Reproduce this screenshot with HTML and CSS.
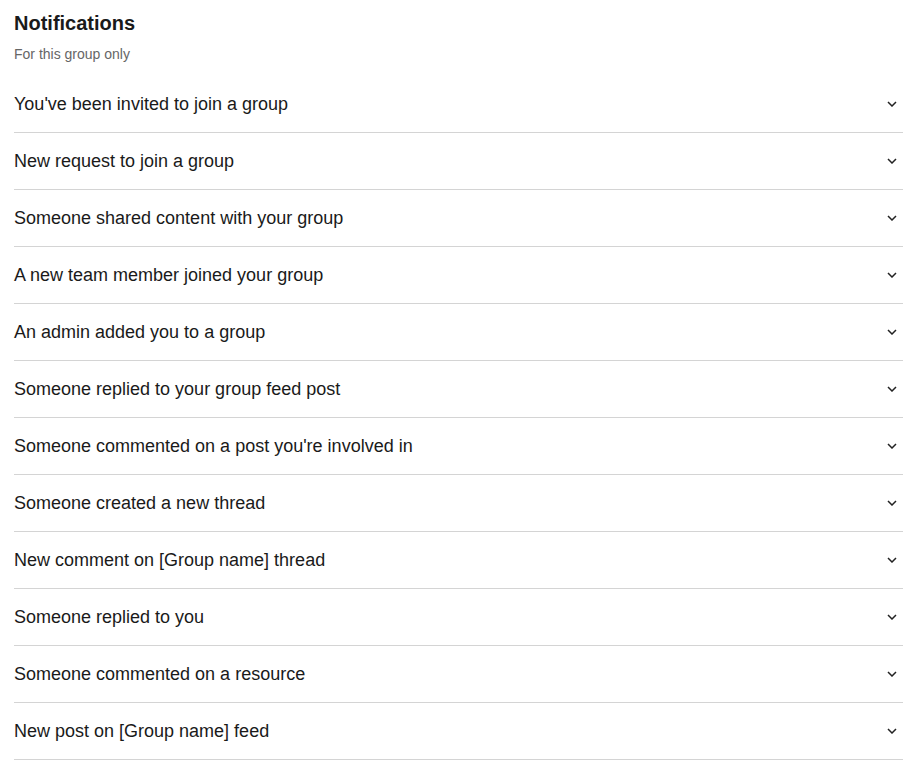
FILE: index.html
```html
<!DOCTYPE html>
<html lang="en">
<head>
  <meta charset="UTF-8">
  <meta name="viewport" content="width=device-width, initial-scale=1.0">
  <title>Notifications</title>
  <link rel="stylesheet" href="styles.css">
</head>
<body>
  <div class="settings">
    <h2 class="title">Notifications</h2>
    <p class="subtitle">For this group only</p>

    <ul class="notify-list">
      <li class="notify-row"><span>You've been invited to join a group</span><svg class="chevron" width="10" height="6" viewBox="0 0 10 6"><path d="M1 1l4 4 4-4" fill="none" stroke="#222" stroke-width="1.5"/></svg></li>
      <li class="notify-row"><span>New request to join a group</span><svg class="chevron" width="10" height="6" viewBox="0 0 10 6"><path d="M1 1l4 4 4-4" fill="none" stroke="#222" stroke-width="1.5"/></svg></li>
      <li class="notify-row"><span>Someone shared content with your group</span><svg class="chevron" width="10" height="6" viewBox="0 0 10 6"><path d="M1 1l4 4 4-4" fill="none" stroke="#222" stroke-width="1.5"/></svg></li>
      <li class="notify-row"><span>A new team member joined your group</span><svg class="chevron" width="10" height="6" viewBox="0 0 10 6"><path d="M1 1l4 4 4-4" fill="none" stroke="#222" stroke-width="1.5"/></svg></li>
      <li class="notify-row"><span>An admin added you to a group</span><svg class="chevron" width="10" height="6" viewBox="0 0 10 6"><path d="M1 1l4 4 4-4" fill="none" stroke="#222" stroke-width="1.5"/></svg></li>
      <li class="notify-row"><span>Someone replied to your group feed post</span><svg class="chevron" width="10" height="6" viewBox="0 0 10 6"><path d="M1 1l4 4 4-4" fill="none" stroke="#222" stroke-width="1.5"/></svg></li>
      <li class="notify-row"><span>Someone commented on a post you're involved in</span><svg class="chevron" width="10" height="6" viewBox="0 0 10 6"><path d="M1 1l4 4 4-4" fill="none" stroke="#222" stroke-width="1.5"/></svg></li>
      <li class="notify-row"><span>Someone created a new thread</span><svg class="chevron" width="10" height="6" viewBox="0 0 10 6"><path d="M1 1l4 4 4-4" fill="none" stroke="#222" stroke-width="1.5"/></svg></li>
      <li class="notify-row"><span>New comment on [Group name] thread</span><svg class="chevron" width="10" height="6" viewBox="0 0 10 6"><path d="M1 1l4 4 4-4" fill="none" stroke="#222" stroke-width="1.5"/></svg></li>
      <li class="notify-row"><span>Someone replied to you</span><svg class="chevron" width="10" height="6" viewBox="0 0 10 6"><path d="M1 1l4 4 4-4" fill="none" stroke="#222" stroke-width="1.5"/></svg></li>
      <li class="notify-row"><span>Someone commented on a resource</span><svg class="chevron" width="10" height="6" viewBox="0 0 10 6"><path d="M1 1l4 4 4-4" fill="none" stroke="#222" stroke-width="1.5"/></svg></li>
      <li class="notify-row"><span>New post on [Group name] feed</span><svg class="chevron" width="10" height="6" viewBox="0 0 10 6"><path d="M1 1l4 4 4-4" fill="none" stroke="#222" stroke-width="1.5"/></svg></li>
    </ul>
  </div>
</body>
</html>
```

FILE: styles.css
```css
body {
  font-family: "Liberation Sans", Arial, sans-serif;
  background: #fff;
  color: #1a1a1a;
  margin: 0;
  padding: 0;
}

.settings {
  padding: 11px 8px 0 14px;
}

.title {
  margin: 0;
  font-size: 20px;
  line-height: 24px;
  font-weight: bold;
  color: #1a1a1a;
}

.subtitle {
  margin: 11px 0 0;
  font-size: 14px;
  line-height: 16px;
  color: #666;
}

.notify-list {
  list-style: none;
  margin: 14px 0 0;
  padding: 0;
}

.notify-row {
  display: flex;
  justify-content: space-between;
  align-items: center;
  height: 56px;
  border-bottom: 1px solid #d4d4d4;
  font-size: 18px;
  padding-right: 6px;
}

.chevron {
  display: block;
}
```
